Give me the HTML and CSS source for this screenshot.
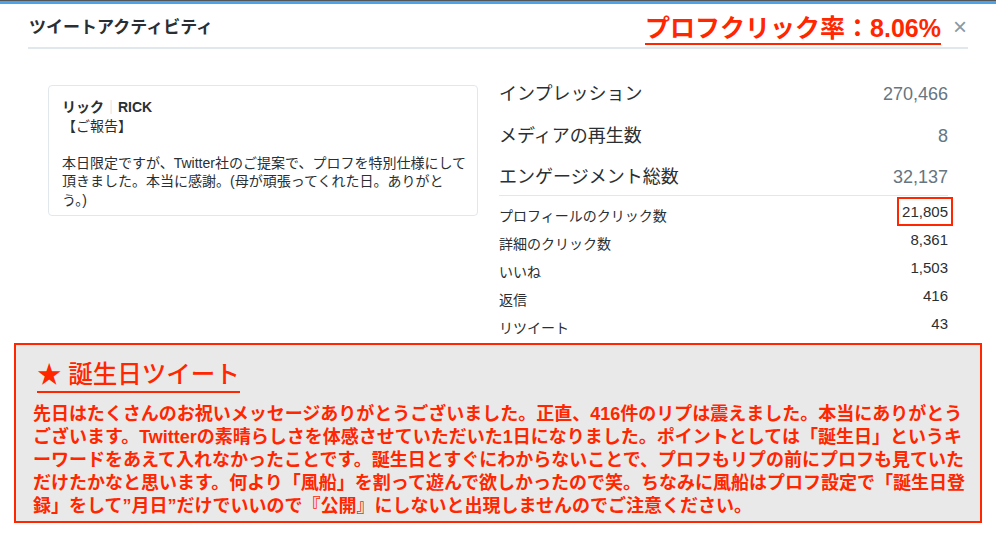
FILE: index.html
```html
<!DOCTYPE html>
<html lang="ja">
<head>
    <meta charset="UTF-8">
    <title>ツイートアクティビティ</title>
    <link rel="stylesheet" href="styles.css">
</head>
<body>
    <div class="topbar"></div>

    <div class="modal">
        <div class="modal-header">
            <h1 class="modal-title">ツイートアクティビティ</h1>
            <div class="header-right">
                <span class="click-rate">プロフクリック率：8.06%</span>
                <span class="close">&times;</span>
            </div>
        </div>

        <div class="modal-body">
            <div class="tweet-card">
                <div class="tweet-user">リック<span class="sep">｜</span>RICK</div>
                <div class="tweet-text">【ご報告】<br><br>本日限定ですが、Twitter社のご提案で、プロフを特別仕様にして頂きました。本当に感謝。(母が頑張ってくれた日。ありがとう。)</div>
            </div>

            <div class="stats">
                <div class="stat-big"><span>インプレッション</span><span class="num">270,466</span></div>
                <div class="stat-big"><span>メディアの再生数</span><span class="num">8</span></div>
                <div class="stat-big"><span>エンゲージメント総数</span><span class="num">32,137</span></div>
                <div class="stat-list">
                    <div class="stat-row"><span>プロフィールのクリック数</span><span class="num marked">21,805</span></div>
                    <div class="stat-row"><span>詳細のクリック数</span><span class="num">8,361</span></div>
                    <div class="stat-row"><span>いいね</span><span class="num">1,503</span></div>
                    <div class="stat-row"><span>返信</span><span class="num">416</span></div>
                    <div class="stat-row"><span>リツイート</span><span class="num">43</span></div>
                </div>
            </div>
        </div>
    </div>

    <div class="note">
        <h2 class="note-title">★ 誕生日ツイート</h2>
        <p class="note-text">先日はたくさんのお祝いメッセージありがとうございました。正直、416件のリプは震えました。本当にありがとうございます。Twitterの素晴らしさを体感させていただいた1日になりました。ポイントとしては「誕生日」というキーワードをあえて入れなかったことです。誕生日とすぐにわからないことで、プロフもリプの前にプロフも見ていただけたかなと思います。何より「風船」を割って遊んで欲しかったので笑。ちなみに風船はプロフ設定で「誕生日登録」をして”月日”だけでいいので『公開』にしないと出現しませんのでご注意ください。</p>
    </div>
</body>
</html>
```

FILE: styles.css
```css
body {
    margin: 0;
    background-color: #fff;
    color: #292f33;
    font-family: "Liberation Sans", "Noto Sans CJK JP", sans-serif;
    width: 996px;
    height: 533px;
    overflow: hidden;
}
.topbar {
    height: 3px;
    background-color: #4da2e8;
    border-top: 1px solid #555;
}
.modal {
    padding: 0 28px;
}
.modal-header {
    display: flex;
    justify-content: space-between;
    align-items: center;
    height: 43px;
    border-bottom: 2px solid #e1e8ed;
}
.modal-title {
    margin: 0 0 0 1px;
    font-size: 17px;
    font-weight: bold;
    color: #292f33;
}
.header-right {
    display: flex;
    align-items: center;
    margin-right: 1px;
}
.click-rate {
    color: #ff2600;
    font-size: 25px;
    font-weight: bold;
    line-height: 28px;
    border-bottom: 2px solid #ff2600;
    margin-top: 7px;
    padding-bottom: 1px;
}
.close {
    color: #8899a6;
    font-size: 24px;
    line-height: 24px;
    margin-left: 12px;
    margin-top: 3px;
}
.modal-body {
    display: flex;
    padding: 25px 20px 0 20px;
}
.tweet-card {
    width: 406px;
    height: 105px;
    margin-top: 11px;
    padding: 12px 9px 12px 13px;
    border: 1px solid #e1e8ed;
    border-radius: 4px;
    font-size: 14px;
    line-height: 18.5px;
}
.tweet-user {
    font-weight: bold;
    font-size: 14px;
}
.sep {
    color: #ccd6dd;
    font-weight: normal;
}
.stats {
    flex: 1;
    margin-left: 21px;
}
.stat-big {
    display: flex;
    justify-content: space-between;
    font-size: 18px;
    height: 41.5px;
    line-height: 40px;
}
.stat-big .num {
    color: #66757f;
}
.stat-list {
    border-top: 1px solid #e1e8ed;
    margin-top: -4px;
    padding-top: 6px;
}
.stat-row {
    display: flex;
    justify-content: space-between;
    align-items: flex-start;
    font-size: 14px;
    height: 28px;
    line-height: 18px;
}
.stat-row span:first-child {
    padding-top: 5px;
}
.stat-row .num {
    font-size: 15px;
    padding-top: 1px;
}
.marked {
    outline: 2px solid #ff2600;
    outline-offset: 3px;
}
.note {
    position: absolute;
    left: 14px;
    top: 343px;
    background-color: #e9e9e9;
    border: 2px solid #ff2600;
    padding: 0 6px 0 17px;
    box-sizing: border-box;
    width: 968px;
    height: 180px;
    color: #ff2600;
}
.note-title {
    display: inline-block;
    margin: 15px 0 0 4px;
    font-size: 24.5px;
    font-weight: 500;
    line-height: 30px;
    padding-bottom: 1px;
    border-bottom: 2px solid #ff2600;
}
.note-text {
    margin: 10px 0 0 0;
    font-size: 18px;
    font-weight: bold;
    line-height: 23px;
}
```
